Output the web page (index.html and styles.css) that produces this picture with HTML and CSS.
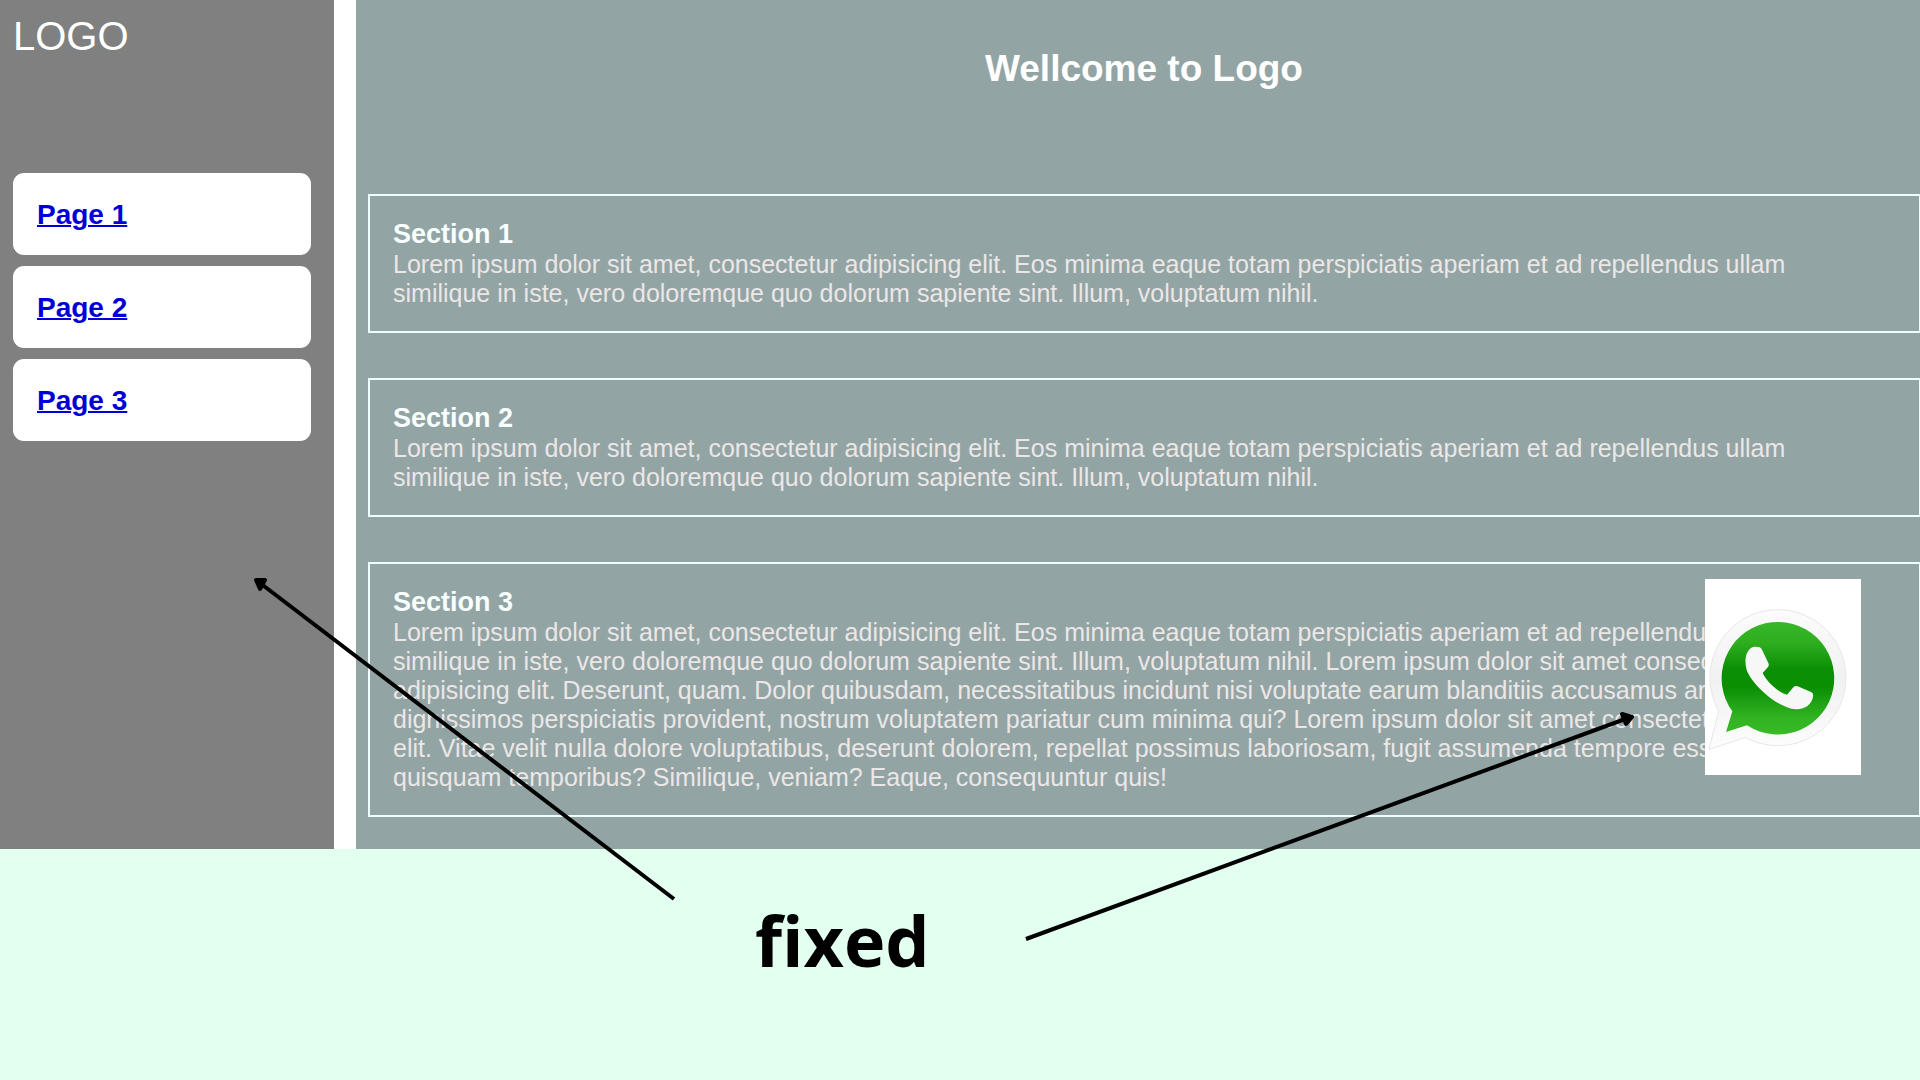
FILE: index.html
```html
<!DOCTYPE html>
<html lang="en">
<head>
<meta charset="utf-8">
<title>Wellcome to Logo</title>
<link rel="stylesheet" href="styles.css">
</head>
<body>
<div class="page">
  <aside class="sidebar">
    <div class="logo">LOGO</div>
    <nav class="menu">
      <div class="menu-item"><a href="#section-1">Page 1</a></div>
      <div class="menu-item"><a href="#section-2">Page 2</a></div>
      <div class="menu-item"><a href="#section-3">Page 3</a></div>
    </nav>
  </aside>
  <main class="content">
    <h1 class="title">Wellcome to Logo</h1>
    <section class="section" id="section-1">
      <h2>Section 1</h2>
      <p>Lorem ipsum dolor sit amet, consectetur adipisicing elit. Eos minima eaque totam perspiciatis aperiam et ad repellendus ullam similique in iste, vero doloremque quo dolorum sapiente sint. Illum, voluptatum nihil.</p>
    </section>
    <section class="section" id="section-2">
      <h2>Section 2</h2>
      <p>Lorem ipsum dolor sit amet, consectetur adipisicing elit. Eos minima eaque totam perspiciatis aperiam et ad repellendus ullam similique in iste, vero doloremque quo dolorum sapiente sint. Illum, voluptatum nihil.</p>
    </section>
    <section class="section" id="section-3">
      <h2>Section 3</h2>
      <p>Lorem ipsum dolor sit amet, consectetur adipisicing elit. Eos minima eaque totam perspiciatis aperiam et ad repellendus ullam similique in iste, vero doloremque quo dolorum sapiente sint. Illum, voluptatum nihil. Lorem ipsum dolor sit amet consectetur adipisicing elit. Deserunt, quam. Dolor quibusdam, necessitatibus incidunt nisi voluptate earum blanditiis accusamus architecto dignissimos perspiciatis provident, nostrum voluptatem pariatur cum minima qui? Lorem ipsum dolor sit amet consectetur adipisicing elit. Vitae velit nulla dolore voluptatibus, deserunt dolorem, repellat possimus laboriosam, fugit assumenda tempore esse aliquam quisquam temporibus? Similique, veniam? Eaque, consequuntur quis!</p>
    </section>
  </main>
  <a class="whatsapp" href="#whatsapp" aria-label="WhatsApp">
    <svg viewBox="0 0 468 588" aria-hidden="true">
      <defs>
        <linearGradient id="green" x1="0" y1="0" x2="0" y2="1">
          <stop offset="0" stop-color="#38b629"/>
          <stop offset=".18" stop-color="#2fae20"/>
          <stop offset=".42" stop-color="#0b8f04"/>
          <stop offset=".58" stop-color="#0a8f03"/>
          <stop offset=".85" stop-color="#32b322"/>
          <stop offset="1" stop-color="#38ba27"/>
        </linearGradient>
        <linearGradient id="shell" x1="0" y1="0" x2="0" y2="1">
          <stop offset="0" stop-color="#fcfcfc"/>
          <stop offset=".5" stop-color="#f1f1f1"/>
          <stop offset="1" stop-color="#fdfdfd"/>
        </linearGradient>
      </defs>
      <path d="M41 396A204 204 0 1 1 121 475L12 511Z" fill="url(#shell)" stroke="#e9e6ea" stroke-width="3"/>
      <path d="M82 397A169 169 0 1 1 126 439L63 459Z" fill="url(#green)" stroke="#fff" stroke-width="3" paint-order="stroke"/>
      <path d="M137 208C146 201 158 203 164 205Q169 207 171 212L190 252Q193 259 189 264L173 282C185 307 216 338 246 347L265 325Q270 319 278 322L318 339Q326 342 324 352C321 380 294 392 273 391C212 385 140 314 125 273C119 251 119 223 137 208Z" fill="#f7f7f7"/>
    </svg>
  </a>
</div>
<footer class="note"><strong>fixed</strong></footer>
<svg class="arrows" width="1640" height="950" viewBox="0 0 1640 950" aria-hidden="true">
  <g stroke="#000" stroke-width="4" stroke-linejoin="round">
    <path d="M674 899L260 583M1026 939L1628 718"/>
    <path d="M256 580L265 580L260 589ZM1622 714L1632 717L1626 724Z"/>
  </g>
</svg>
</body>
</html>
```
FILE: styles.css
```css
* {
  box-sizing: border-box;
  margin: 0;
  padding: 0;
}

body {
  position: relative;
  display: flex;
  flex-direction: column;
  min-height: 100vh;
  background: #e2fff0;
  font-family: "Liberation Sans", Arial, sans-serif;
}

.page {
  position: relative;
  display: flex;
  gap: 22px;
  background: #fff;
}

.sidebar {
  flex: none;
  width: 334px;
  padding: 13px 23px 13px 13px;
  background: #808080;
}

.logo {
  color: #fff;
  font-size: 40px;
  line-height: 46px;
}

.menu {
  display: flex;
  flex-direction: column;
  gap: 11px;
  margin-top: 114px;
}

.menu-item {
  height: 82px;
  padding: 25px 24px;
  border-radius: 11px;
  background: #fff;
}

.menu-item a {
  color: #0000d6;
  font-size: 28px;
  font-weight: 700;
  line-height: 34px;
  text-decoration-thickness: 2px;
}

.content {
  flex: 1;
  display: flex;
  flex-direction: column;
  gap: 45px;
  min-width: 0;
  padding: 48px 0 32px 12px;
  background: #93a4a4;
}

.title {
  height: 101px;
  color: #fff;
  font-size: 37px;
  line-height: 42px;
  text-align: center;
}

.section {
  padding: 22px 40px 24px 23px;
  border: 2px solid #f0ffff;
  border-right-width: 1px;
}

.section h2 {
  color: #f8ffff;
  font-size: 27px;
  line-height: 32px;
}

.section p {
  margin-bottom: -1px;
  color: #ebe7e7;
  font-size: 25px;
  line-height: 29px;
}

.whatsapp {
  position: absolute;
  right: 59px;
  bottom: 74px;
  width: 156px;
  height: 196px;
  background: #fff;
}

.whatsapp svg {
  display: block;
  width: 100%;
  height: 100%;
}

.note {
  padding: 43px 0 0 755px;
  font-family: "Open Sans", "Noto Sans", sans-serif;
  font-size: 70px;
  line-height: 96px;
  color: #000;
}

.arrows {
  position: absolute;
  top: 0;
  left: 0;
  pointer-events: none;
}
```
